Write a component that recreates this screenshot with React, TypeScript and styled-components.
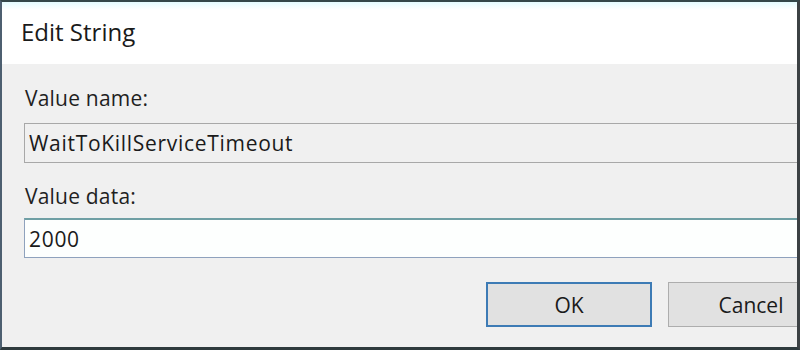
import React from "react";
import styled, { createGlobalStyle } from "styled-components";

const Global = createGlobalStyle`
  html, body { margin: 0; padding: 0; background: #ffffff; }
  body { font-family: "Open Sans", "Noto Sans", sans-serif; }
`;

const Frame = styled.div`
  width: 800px;
  height: 350px;
  box-sizing: border-box;
  border-top: 2px solid #34474a;
  border-left: 2px solid #4d5f70;
  border-right: 3px solid #3c4144;
  border-bottom: 3px solid #2e3a3d;
  overflow: hidden;
  display: flex;
`;

const Dialog = styled.div`
  width: 854px;
  flex-shrink: 0;
  display: flex;
  flex-direction: column;
  background: #f0f0f0;
`;

const TitleBar = styled.div`
  height: 62px;
  flex-shrink: 0;
  box-sizing: border-box;
  background: linear-gradient(#e4fbff 0px, #ffffff 8px);
  padding-left: 19px;
  display: flex;
  align-items: center;
  padding-bottom: 4px;
  font-size: 24px;
  color: #1a1a1a;
`;

const Body = styled.div`
  display: flex;
  flex-direction: column;
  padding: 0 22px;
`;

const Label = styled.label<{ $top: number }>`
  display: block;
  margin-top: ${(p) => p.$top}px;
  font-size: 21px;
  line-height: 28px;
  color: #1f1f1f;
  padding-left: 1px;
  letter-spacing: 0.2px;
`;

const Field = styled.input<{ $editable?: boolean; $top: number }>`
  margin-top: ${(p) => p.$top}px;
  height: 40px;
  box-sizing: border-box;
  width: 100%;
  padding: 0 0 0 4px;
  font-family: "Open Sans", "Noto Sans", sans-serif;
  font-size: 21px;
  letter-spacing: 0.7px;
  color: #1a1a1a;
  outline: none;
  background: ${(p) => (p.$editable ? "#fdfffe" : "#f0f0f0")};
  border: 1px solid ${(p) => (p.$editable ? "#8fa2bd" : "#a8a8a8")};
  border-top-color: ${(p) => (p.$editable ? "#6f9fa4" : "#a8a8a8")};
  border-top-width: ${(p) => (p.$editable ? "2px" : "1px")};
`;

const Buttons = styled.div`
  margin-top: 24px;
  display: flex;
  justify-content: flex-end;
  gap: 16px;
`;

const Button = styled.button<{ $default?: boolean }>`
  width: 166px;
  height: 45px;
  box-sizing: border-box;
  background: #e1e1e1;
  border: ${(p) => (p.$default ? "2px solid #3d7bb5" : "1px solid #adadad")};
  font-family: "Open Sans", "Noto Sans", sans-serif;
  font-size: 21px;
  color: #1a1a1a;
  padding: 0;
`;

export default function App() {
  return (
    <>
      <Global />
      <Frame>
        <Dialog>
          <TitleBar>Edit String</TitleBar>
          <Body>
            <Label $top={20}>Value name:</Label>
            <Field $top={11} readOnly defaultValue="WaitToKillServiceTimeout" />
            <Label $top={19}>Value data:</Label>
            <Field $top={8} $editable defaultValue="2000" />
            <Buttons>
              <Button $default>OK</Button>
              <Button>Cancel</Button>
            </Buttons>
          </Body>
        </Dialog>
      </Frame>
    </>
  );
}
